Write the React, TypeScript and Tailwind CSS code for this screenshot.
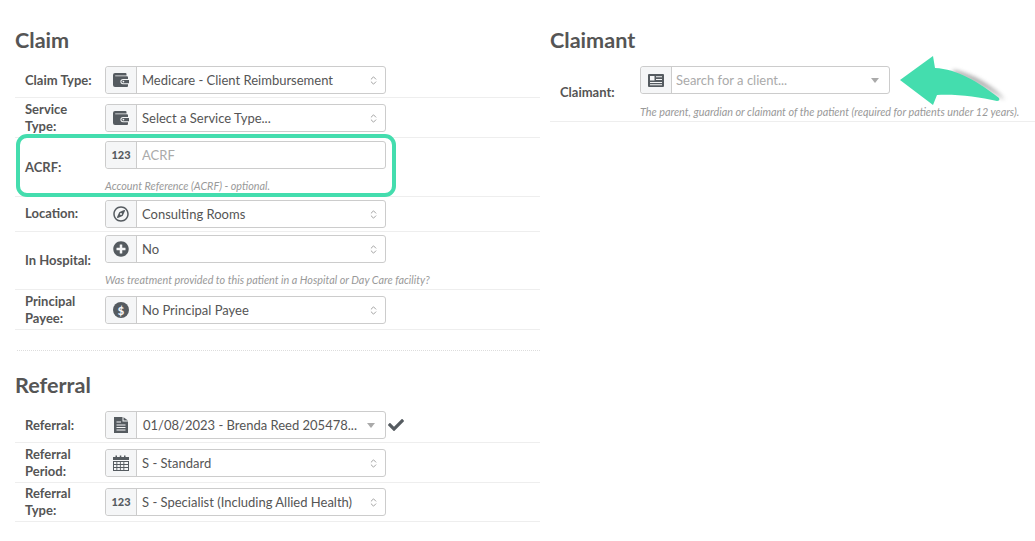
import type { ReactNode } from 'react';
import { ChevronsUpDown } from 'lucide-react';
import { FaCheck, FaPlusCircle, FaRegCompass } from 'react-icons/fa';

const WalletIcon = () => (
  <svg width="16" height="14" viewBox="0 0 16 14" fill="#555b60">
    <path d="M2 0h10.500a1 1 0 0 1 1 1v1.600H2.200v.6H14a1 1 0 0 1 1 1V6H10a2.600 2.600 0 0 0 0 5.200h5V13a1 1 0 0 1-1 1H2a2 2 0 0 1-2-2V2a2 2 0 0 1 2-2z" />
    <path d="M10 7h6v3.200h-6a1.600 1.600 0 0 1 0-3.200z" />
    <circle cx="10.400" cy="8.600" r="0.900" fill="#f5f6f7" />
  </svg>
);

const DollarIcon = () => (
  <span className="flex h-4 w-4 items-center justify-center rounded-full bg-[#555b60] text-[11px] font-black leading-none text-[#f5f6f7]">$</span>
);

const NumbersIcon = () => <span className="text-[11px] font-black text-[#555b60]">123</span>;

const FileIcon = () => (
  <svg width="14" height="16" viewBox="0 0 14 16" fill="#555b60">
    <path d="M0 0h8.500v4.500H14V16H0z" />
    <path d="M9.500 0.200 14 3.600H9.500z" />
    <path d="M2.500 4.500h4.500v1H2.500zM2.500 7.500h9v1h-9zM2.500 10h9v1h-9zM2.500 12.500h9v1h-9z" fill="#f5f6f7" />
  </svg>
);

const CalendarIcon = () => (
  <svg width="16" height="16" viewBox="0 0 16 16" fill="#555b60">
    <path d="M0 2h2.500V0.500h1.500V2h2.800V0.500h1.500V2h2.700V0.500h1.500V2H16v3H0z" />
    <path fillRule="evenodd" d="M0 6h16v10H0zM1 7v2h2.400V7zM4.300 7v2h2.600V7zM7.800 7v2h2.600V7zM11.300 7v2h3.700V7zM1 10v2h2.400v-2zM4.300 10v2h2.600v-2zM7.800 10v2h2.600v-2zM11.300 10v2h3.700v-2zM1 13v2h2.400v-2zM4.300 13v2h2.600v-2zM7.800 13v2h2.600v-2zM11.300 13v2h3.700v-2z" />
  </svg>
);

const IdCardIcon = () => (
  <svg width="16" height="13" viewBox="0 0 16 13" fill="#555b60">
    <path fillRule="evenodd" d="M1 0h14a1 1 0 0 1 1 1v11a1 1 0 0 1-1 1H1a1 1 0 0 1-1-1V1a1 1 0 0 1 1-1zM2 2v4.500h4.500V2zM8 2.200v1h6v-1zM8 5v1h6V5zM2 8v1h12V8zM2 10.200v1h12v-1z" />
  </svg>
);

type Control = 'updown' | 'caret' | 'none';

function Select({ icon, value, width = 'w-[281px]', placeholder, control = 'updown', clip = true, indent = 'pl-[5px]' }: { icon: ReactNode; value: string; width?: string; placeholder?: boolean; control?: Control; clip?: boolean; indent?: string }) {
  return (
    <div className={`flex h-[28px] items-stretch rounded-[3px] border border-[#ccc] bg-white ${width}`}>
      <div className="flex w-[31px] shrink-0 items-center justify-center rounded-l-[3px] border-r border-[#ccc] bg-[#f5f6f7]">{icon}</div>
      <div className={`flex min-w-0 flex-1 items-center pr-[6px] ${indent}`}>
        <span className={`flex-1 whitespace-nowrap text-[13px] leading-[18px] ${clip ? '-mt-[3px] h-[16px] overflow-hidden' : '-mt-[1px]'} ${placeholder ? 'text-[#aaa]' : 'text-[#555]'}`}>{value}</span>
        {control === 'caret' && <span className="mr-[4px] h-0 w-0 border-x-[4px] border-t-[5px] border-x-transparent border-t-[#aaa]" />}
        {control === 'updown' && <ChevronsUpDown size={11} strokeWidth={2} className="text-[#999]" />}
      </div>
    </div>
  );
}

function Row({ label, height, children, help, helpGap = 'mt-[10px]', nudge, labelClass = '' }: { label: string; height: string; children: ReactNode; help?: string; helpGap?: string; nudge?: boolean; labelClass?: string }) {
  return (
    <div className={`flex items-center border-b border-[#eee] pl-[10px] ${height}`}>
      <div className={`w-[80px] shrink-0 pr-2 text-[13px] font-bold leading-[17px] text-[#555] ${labelClass}`}>{label}</div>
      <div className={`flex flex-col ${nudge ? 'mt-[1px]' : ''}`}>
        {children}
        {help && <p className={`whitespace-nowrap text-[10.8px] italic leading-[14px] text-[#999] ${helpGap}`}>{help}</p>}
      </div>
    </div>
  );
}

function Heading({ children }: { children: ReactNode }) {
  return <h2 className="mb-[9px] h-[28px] text-[21.6px] font-bold leading-[28px] text-[#555]">{children}</h2>;
}

export default function App() {
  return (
    <div className="flex h-[541px] w-[1035px] overflow-hidden bg-white pt-[26px] pl-[15px] font-['Lato',sans-serif]">
      <div className="w-[525px] shrink-0">
        <Heading>Claim</Heading>
        <Row label="Claim Type:" height="h-[35px]">
          <Select icon={<WalletIcon />} value="Medicare - Client Reimbursement" />
        </Row>
        <Row label="Service Type:" height="h-[40px]" nudge>
          <Select icon={<WalletIcon />} value="Select a Service Type..." />
        </Row>
        <div className="relative">
          <Row label="ACRF:" height="h-[59px]" help="Account Reference (ACRF) - optional.">
            <Select icon={<NumbersIcon />} value="ACRF" placeholder control="none" />
          </Row>
          {/* callout round the ACRF field */}
          <div className="pointer-events-none absolute left-[1px] top-[-4px] h-[63px] w-[380px] rounded-[11px] border-4 border-[#44ddae]" />
        </div>
        <Row label="Location:" height="h-[35px]" labelClass="-mt-[2px]">
          <Select icon={<FaRegCompass size={16} color="#555b60" />} value="Consulting Rooms" />
        </Row>
        <Row label="In Hospital:" height="h-[58px]" help="Was treatment provided to this patient in a Hospital or Day Care facility?" helpGap="mt-[10px] -mb-[1px]">
          <Select icon={<FaPlusCircle size={16} color="#555b60" />} value="No" />
        </Row>
        <Row label="Principal Payee:" height="h-[40px]" nudge>
          <Select icon={<DollarIcon />} value="No Principal Payee" />
        </Row>

        <div className="mt-[20px] ml-[2px] border-t border-dotted border-[#ddd]" />

        <div className="mt-[20px]">
          <Heading>Referral</Heading>
        </div>
        <Row label="Referral:" height="h-[35px]">
          <div className="flex items-center">
            <Select icon={<FileIcon />} value="01/08/2023 - Brenda Reed 205478..." control="caret" clip={false} indent="pl-[6px]" />
            <FaCheck size={16} color="#555b60" className="ml-[2px]" />
          </div>
        </Row>
        <Row label="Referral Period:" height="h-[40px]" nudge>
          <Select icon={<CalendarIcon />} value="S - Standard" />
        </Row>
        <Row label="Referral Type:" height="h-[39px]">
          <Select icon={<NumbersIcon />} value="S - Specialist (Including Allied Health)" />
        </Row>
      </div>

      <div className="relative ml-[10px] flex-1">
        <Heading>Claimant</Heading>
        <Row label="Claimant:" height="h-[59px]" help="The parent, guardian or claimant of the patient (required for patients under 12 years)." helpGap="mt-[11px] -mb-[1px]">
          <Select icon={<IdCardIcon />} value="Search for a client..." width="w-[250px]" placeholder control="caret" indent="pl-[4px]" />
        </Row>
        {/* green arrow pointing at the claimant field */}
        <svg className="pointer-events-none absolute left-[345px] top-[24px]" width="120" height="60" viewBox="0 0 120 60">
          <defs>
            <filter id="arrow-shadow" x="-20%" y="-40%" width="140%" height="180%">
              <feGaussianBlur stdDeviation="2" />
            </filter>
          </defs>
          <path d="M58 20C78 24 98 36 110 50C100 44 80 30 58 23z" fill="#777" opacity="0.7" filter="url(#arrow-shadow)" />
          <path d="M5 30 38 6 40 18C62 19 84 32 104 48C105 50 104 51 102 51C84 47 62 44 42 45L38 55z" fill="#44ddae" />
        </svg>
      </div>
    </div>
  );
}
